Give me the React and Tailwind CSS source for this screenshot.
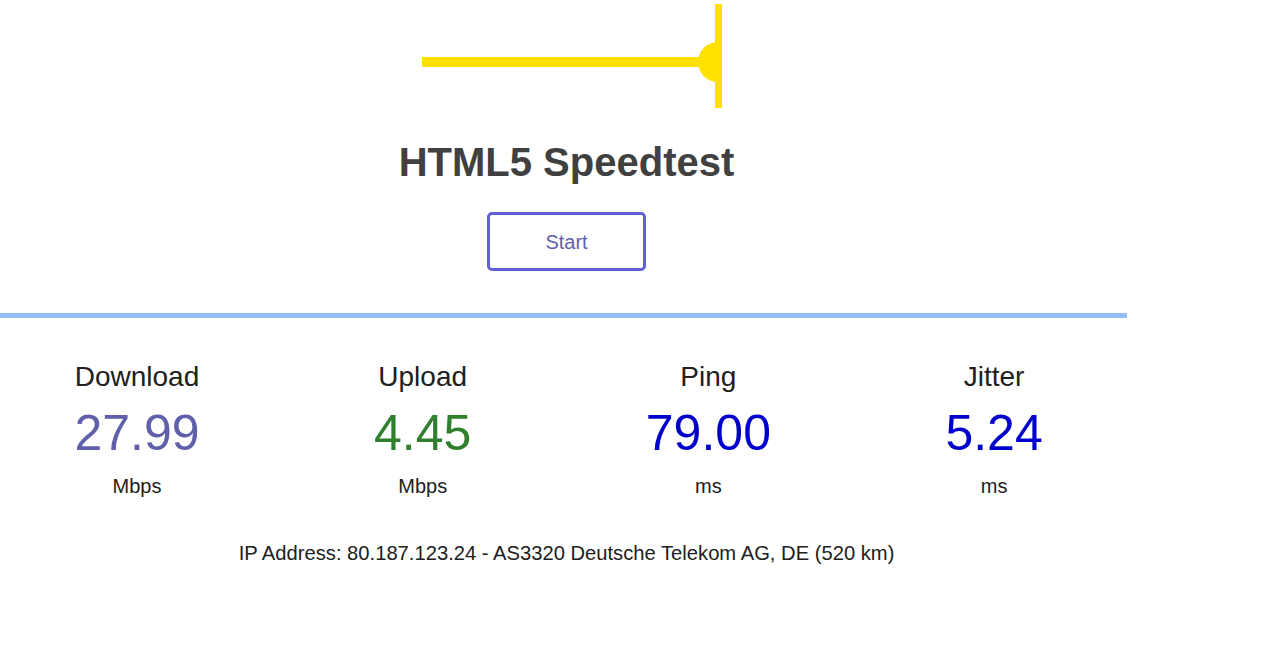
const stats = [
  { label: "Download", value: "27.99", unit: "Mbps", color: "text-[#6060aa]" },
  { label: "Upload", value: "4.45", unit: "Mbps", color: "text-[#308030]" },
  { label: "Ping", value: "79.00", unit: "ms", color: "text-[#0000cc]" },
  { label: "Jitter", value: "5.24", unit: "ms", color: "text-[#0000cc]" },
];

const Gauge = () => (
  <svg width="1133" height="110" viewBox="0 0 1133 110" className="block">
    <rect x="422" y="57" width="296" height="10" fill="#ffe100" />
    <path d="M718 42 A20 20 0 0 0 718 82 Z" fill="#ffe100" />
    <rect x="715" y="4" width="7" height="104" fill="#ffe100" />
  </svg>
);

export default function App() {
  return (
    <div className="min-h-screen bg-white font-['Liberation_Sans',Arial,sans-serif]">
      <div className="w-[1133px]">
        <Gauge />
        <h1 className="mt-[28px] text-center text-[40px] leading-[48px] font-bold text-[#404040]">
          HTML5 Speedtest
        </h1>
        <div className="mt-[26px] flex justify-center">
          <button className="w-[159px] h-[59px] rounded-[5px] border-[3px] border-[#6262d4] text-[20px] text-[#6060aa] bg-white">
            Start
          </button>
        </div>
        <div className="mt-[42px] h-[5px] w-[1127px] bg-[#92bdf6]" />
        <div className="mt-[43px] flex pl-[17px] gap-[45.7px]">
          {stats.map((s) => (
            <div key={s.label} className="w-[240px] flex flex-col items-center">
              <div className="text-[28px] leading-[32px] text-[#202020]">{s.label}</div>
              <div className={`mt-[12px] text-[50px] leading-[56px] ${s.color}`}>{s.value}</div>
              <div className="mt-[13px] text-[20px] leading-[24px] text-[#202020]">{s.unit}</div>
            </div>
          ))}
        </div>
        <p className="mt-[43px] text-center text-[20.2px] leading-[24px] text-[#202020]">
          IP Address: 80.187.123.24 - AS3320 Deutsche Telekom AG, DE (520 km)
        </p>
      </div>
    </div>
  );
}
